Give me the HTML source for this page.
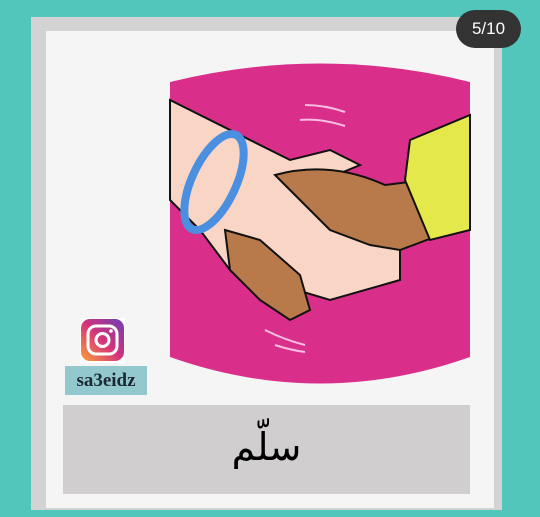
<!DOCTYPE html>
<html><head><meta charset="utf-8"><style>
body{margin:0;width:540px;height:517px;background:#52c6ba;position:relative;overflow:hidden;font-family:"Liberation Sans",sans-serif}
.frame{position:absolute;left:31px;top:17px;width:471px;height:493px;background:#d3d3d3}
.inner{position:absolute;left:46px;top:31px;width:448px;height:477px;background:#f5f5f5}
.badge{position:absolute;left:456px;top:10px;width:65px;height:38px;border-radius:19px;background:#333;color:#fff;font-size:17px;line-height:38px;text-align:center}
.gbox{position:absolute;left:63px;top:405px;width:407px;height:89px;background:#d0cecf;text-align:center;font-family:"DejaVu Serif","DejaVu Sans",serif;font-size:38px;line-height:84px;color:#000}
.lab{position:absolute;left:65px;top:366px;width:82px;height:29px;background:#94c8cf;font-family:"Liberation Serif",serif;font-weight:bold;font-size:19px;line-height:29px;text-align:center;color:#1a2a33}
</style></head><body>
<div class="frame"></div><div class="inner"></div>
<svg style="position:absolute;left:0;top:0" width="540" height="517">
<defs><linearGradient id="ig" x1="0" y1="1" x2="1" y2="0"><stop offset="0" stop-color="#f9a33a"/><stop offset=".5" stop-color="#d5327a"/><stop offset="1" stop-color="#6a3fb8"/></linearGradient></defs>
<path d="M170 82 Q320 45 470 82 L470 357 Q320 410 170 357 Z" fill="#d92f8a"/>
<path d="M170 100 L230 130 L290 160 L330 150 L360 165 L300 190 L400 250 L400 280 L330 300 L230 270 L200 230 L170 200 Z" fill="#f8d5c4" stroke="#111" stroke-width="2"/>
<path d="M275 175 Q330 160 385 185 L425 180 L440 235 L400 250 L370 245 L330 230 L300 200 Z" fill="#b87a4a" stroke="#111" stroke-width="2"/>
<path d="M225 230 L260 240 L300 275 L310 310 L290 320 L260 300 L230 270 Z" fill="#b87a4a" stroke="#111" stroke-width="2"/>
<path d="M410 140 L470 115 L470 230 L430 240 L405 180 Z" fill="#e4e84a" stroke="#111" stroke-width="2"/>
<ellipse cx="214" cy="182" rx="22" ry="52" transform="rotate(25 214 182)" fill="none" stroke="#4a8fe0" stroke-width="8"/>
<path d="M305 105 Q325 105 345 112 M300 120 Q320 118 345 126 M265 330 Q285 340 305 345 M275 345 Q290 350 305 352" stroke="#f8bde0" stroke-width="2" fill="none"/>
<rect x="80" y="318" width="45" height="45" fill="#fff"/>
<rect x="81" y="319" width="43" height="42" rx="9" fill="url(#ig)"/>
<rect x="88" y="326" width="29" height="28" rx="8" fill="none" stroke="#fff" stroke-width="3"/>
<circle cx="102.5" cy="340" r="6.5" fill="none" stroke="#fff" stroke-width="3"/>
<circle cx="111" cy="331" r="1.8" fill="#fff"/>
</svg>
<div class="lab">sa3eidz</div>
<div class="gbox">سلّم</div>
<div class="badge">5/10</div>
</body></html>
